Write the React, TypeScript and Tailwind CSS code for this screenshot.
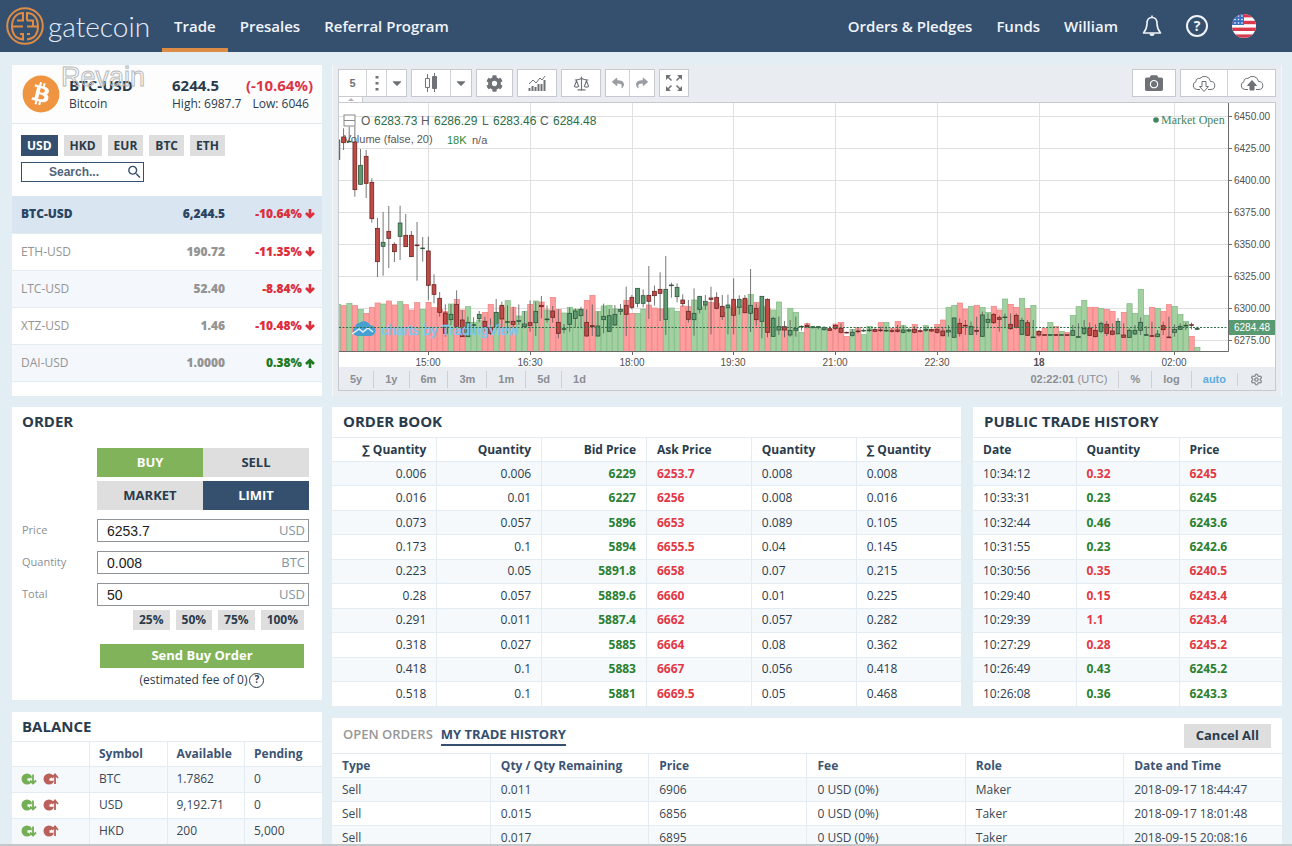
import type { ReactNode } from "react";
import { FaBitcoin, FaCamera, FaCaretDown, FaCog, FaReply, FaShare } from "react-icons/fa";
import { MdSearch } from "react-icons/md";
import { Scale, Settings } from "lucide-react";

const markets = [
  { pair: "BTC-USD", price: "6,244.5", change: "-10.64%", up: false, active: true },
  { pair: "ETH-USD", price: "190.72", change: "-11.35%", up: false, active: false },
  { pair: "LTC-USD", price: "52.40", change: "-8.84%", up: false, active: false },
  { pair: "XTZ-USD", price: "1.46", change: "-10.48%", up: false, active: false },
  { pair: "DAI-USD", price: "1.0000", change: "0.38%", up: true, active: false },
];

const orderBook = [
  ["0.006", "0.006", "6229", "6253.7", "0.008", "0.008"],
  ["0.016", "0.01", "6227", "6256", "0.008", "0.016"],
  ["0.073", "0.057", "5896", "6653", "0.089", "0.105"],
  ["0.173", "0.1", "5894", "6655.5", "0.04", "0.145"],
  ["0.223", "0.05", "5891.8", "6658", "0.07", "0.215"],
  ["0.28", "0.057", "5889.6", "6660", "0.01", "0.225"],
  ["0.291", "0.011", "5887.4", "6662", "0.057", "0.282"],
  ["0.318", "0.027", "5885", "6664", "0.08", "0.362"],
  ["0.418", "0.1", "5883", "6667", "0.056", "0.418"],
  ["0.518", "0.1", "5881", "6669.5", "0.05", "0.468"],
];

const publicTrades = [
  { time: "10:34:12", qty: "0.32", price: "6245", up: false },
  { time: "10:33:31", qty: "0.23", price: "6245", up: true },
  { time: "10:32:44", qty: "0.46", price: "6243.6", up: true },
  { time: "10:31:55", qty: "0.23", price: "6242.6", up: true },
  { time: "10:30:56", qty: "0.35", price: "6240.5", up: false },
  { time: "10:29:40", qty: "0.15", price: "6243.4", up: false },
  { time: "10:29:39", qty: "1.1", price: "6243.4", up: false },
  { time: "10:27:29", qty: "0.28", price: "6245.2", up: false },
  { time: "10:26:49", qty: "0.43", price: "6245.2", up: true },
  { time: "10:26:08", qty: "0.36", price: "6243.3", up: true },
];

const balances = [
  ["BTC", "1.7862", "0"],
  ["USD", "9,192.71", "0"],
  ["HKD", "200", "5,000"],
];

const myTrades = [
  ["Sell", "0.011", "6906", "0 USD (0%)", "Maker", "2018-09-17 18:44:47"],
  ["Sell", "0.015", "6856", "0 USD (0%)", "Taker", "2018-09-17 18:01:48"],
  ["Sell", "0.017", "6895", "0 USD (0%)", "Taker", "2018-09-15 20:08:16"],
];

// 1 = up, 0 = down, then: volume top, high, body top, body bottom, low (thirds of a pixel)
const candles = [
  [1, 253, -240, -240, -182, -182], [0, 257, -275, -249, -232, -210], [1, 250, -280, -236, -234, -234],
  [0, 257, -280, -234, -91, -70], [1, 268, -213, -164, -107, -107], [0, 280, -210, -191, -110, -66],
  [0, 262, -125, -113, -4, 8], [0, 249, -6, 25, 125, 171], [1, 252, -24, 67, 79, 167],
  [0, 243, -42, 34, 55, 144], [0, 255, 67, 73, 95, 126], [1, 245, -43, 9, 49, 120],
  [0, 254, -18, 46, 80, 80], [0, 270, 33, 46, 110, 110], [0, 248, 6, 75, 77, 182],
  [1, 268, 51, 84, 86, 125], [0, 247, 50, 93, 196, 240], [0, 263, 163, 194, 223, 250],
  [0, 268, 216, 235, 277, 290], [0, 275, 253, 279, 340, 350], [1, 252, 253, 283, 299, 315],
  [0, 238, 211, 253, 319, 340], [0, 270, 270, 300, 350, 350], [1, 260, 290, 307, 350, 350],
  [1, 307, 292, 314, 316, 340], [1, 300, 273, 283, 296, 307], [0, 277, 290, 304, 320, 335],
  [0, 253, 295, 322, 340, 345], [1, 278, 237, 277, 320, 330], [0, 262, 245, 256, 297, 325],
  [1, 242, 256, 305, 307, 340], [0, 262, 260, 304, 313, 325], [1, 288, 253, 302, 304, 315],
  [1, 274, 273, 312, 320, 325], [0, 253, 241, 308, 316, 335], [1, 243, 245, 274, 308, 348],
  [0, 246, 228, 256, 260, 295], [1, 270, 256, 297, 299, 308], [0, 232, 258, 273, 292, 308],
  [0, 268, 268, 307, 340, 355], [1, 279, 312, 326, 328, 340], [1, 262, 262, 280, 313, 335],
  [1, 268, 265, 273, 295, 322], [1, 267, 260, 269, 287, 325], [0, 241, 268, 307, 348, 350],
  [0, 226, 253, 317, 320, 348], [1, 274, 275, 318, 348, 350], [1, 258, 251, 289, 299, 340],
  [1, 256, 267, 287, 334, 336], [1, 267, 255, 283, 315, 318], [1, 268, 252, 268, 274, 285],
  [0, 241, 200, 256, 283, 348], [0, 280, 225, 232, 262, 268], [1, 280, 205, 205, 250, 262],
  [1, 267, 208, 227, 250, 262], [0, 255, 138, 226, 244, 297], [0, 264, 197, 214, 227, 257],
  [0, 267, 157, 208, 220, 303], [1, 265, 108, 208, 298, 345], [1, 264, 188, 195, 197, 233],
  [1, 274, 190, 202, 230, 247], [0, 258, 223, 240, 251, 260], [0, 260, 240, 274, 298, 308],
  [1, 240, 205, 280, 299, 347], [1, 262, 229, 229, 268, 280], [1, 257, 225, 244, 255, 270],
  [0, 247, 200, 234, 238, 343], [0, 250, 217, 232, 265, 268], [0, 277, 225, 259, 290, 300],
  [1, 265, 224, 255, 263, 343], [0, 262, 175, 238, 286, 343], [1, 258, 226, 238, 262, 284],
  [0, 240, 225, 235, 278, 280], [1, 223, 147, 256, 280, 336], [0, 247, 250, 265, 299, 318],
  [1, 260, 229, 229, 304, 355], [0, 265, 235, 238, 337, 352], [1, 270, 290, 295, 349, 349],
  [1, 246, 290, 320, 330, 345], [0, 325, 303, 320, 330, 352], [1, 265, 300, 331, 345, 350],
  [1, 277, 290, 325, 331, 350], [1, 337, 316, 319, 321, 332], [0, 311, 308, 316, 320, 325],
  [1, 322, 318, 320, 322, 326], [1, 322, 318, 320, 322, 328], [1, 325, 318, 323, 329, 332],
  [0, 328, 318, 326, 331, 333], [0, 312, 313, 316, 325, 330], [0, 307, 310, 325, 337, 340],
  [0, 349, 335, 337, 339, 340], [1, 328, 328, 337, 346, 350], [0, 323, 325, 333, 335, 340],
  [1, 344, 325, 331, 333, 336], [1, 319, 322, 330, 332, 336], [0, 330, 322, 328, 334, 336],
  [0, 308, 320, 330, 332, 336], [1, 307, 320, 331, 333, 336], [0, 326, 325, 332, 334, 338],
  [0, 304, 315, 330, 334, 338], [1, 317, 316, 330, 337, 340], [1, 328, 324, 330, 333, 337],
  [0, 313, 318, 328, 337, 340], [0, 333, 325, 332, 334, 338], [1, 317, 320, 328, 331, 336],
  [0, 330, 325, 328, 333, 336], [0, 313, 320, 328, 337, 341], [0, 300, 320, 333, 347, 350],
  [1, 262, 315, 331, 336, 350], [1, 256, 292, 294, 352, 352], [0, 249, 295, 310, 340, 350],
  [0, 267, 300, 316, 318, 345], [1, 259, 305, 319, 343, 345], [0, 256, 290, 331, 334, 345],
  [1, 262, 275, 285, 349, 350], [1, 277, 280, 298, 307, 325], [0, 259, 280, 283, 308, 312],
  [0, 270, 287, 293, 298, 335], [1, 237, 280, 291, 293, 325], [0, 253, 280, 313, 326, 330],
  [0, 262, 280, 286, 322, 325], [1, 235, 293, 301, 343, 345], [0, 265, 300, 308, 346, 348],
  [1, 256, 300, 351, 353, 353], [0, 334, 330, 334, 345, 350], [0, 325, 344, 344, 346, 346],
  [1, 307, 344, 344, 346, 346], [0, 319, 344, 344, 346, 346], [1, 334, 344, 344, 346, 346],
  [0, 337, 344, 344, 346, 346], [1, 286, 315, 332, 346, 348], [1, 260, 310, 350, 352, 353],
  [1, 241, 300, 325, 340, 345], [0, 262, 307, 324, 346, 348], [0, 262, 313, 331, 350, 352],
  [1, 265, 305, 310, 334, 340], [0, 268, 303, 313, 340, 348], [0, 274, 310, 333, 343, 346],
  [1, 343, 294, 304, 341, 343], [0, 277, 310, 345, 352, 353], [1, 251, 325, 331, 352, 354],
  [1, 280, 315, 331, 342, 345], [1, 208, 292, 307, 331, 345], [1, 286, 318, 344, 346, 347],
  [0, 262, 305, 347, 349, 350], [1, 265, 330, 342, 350, 352], [0, 274, 305, 317, 329, 345],
  [0, 254, 290, 351, 353, 353], [1, 259, 313, 328, 337, 350], [1, 283, 310, 319, 328, 330],
  [1, 304, 308, 316, 318, 330], [0, 349, 308, 314, 316, 328], [1, 382, 320, 325, 328, 328],
];

const timeTicks = [
  { label: "15:00", x: 89 },
  { label: "16:30", x: 191 },
  { label: "18:00", x: 293 },
  { label: "19:30", x: 394 },
  { label: "21:00", x: 496 },
  { label: "22:30", x: 598 },
  { label: "18", x: 700, bold: true },
  { label: "02:00", x: 835 },
];

const priceTicks = ["6450.00", "6425.00", "6400.00", "6375.00", "6350.00", "6325.00", "6300.00", "6275.00"];

const STEP = 5.653;
const toY = (v: number) => 117 + v / 3;

function PriceChart() {
  return (
    <svg viewBox="0 0 936 264" className="block w-full bg-white font-['Liberation_Sans',Arial,sans-serif]">
      <g stroke="#e0e0e0">
        {timeTicks.map((t) => (
          <line key={t.label} x1={t.x + 0.5} x2={t.x + 0.5} y1="0" y2="248" />
        ))}
        {priceTicks.map((p, i) => (
          <line key={p} x1="0" x2="889" y1={13.5 + i * 32} y2={13.5 + i * 32} />
        ))}
      </g>

      <g fontSize="12" fill="#5a5a5a">
        <rect x="5" y="12" width="11" height="11" fill="white" stroke="#888" />
        <path d="M5 17.5h11" stroke="#888" />
        <text x="22" y="22">O</text>
        <text x="35" y="22" fill="#2c6e4a">6283.73</text>
        <text x="82" y="22">H</text>
        <text x="95" y="22" fill="#2c6e4a">6286.29</text>
        <text x="143" y="22">L</text>
        <text x="154" y="22" fill="#2c6e4a">6283.46</text>
        <text x="201" y="22">C</text>
        <text x="214" y="22" fill="#2c6e4a">6284.48</text>
        <text x="5" y="40" fontSize="11">Volume (false, 20)</text>
        <text x="108" y="41" fontSize="11" fill="#2a8a35">18K</text>
        <text x="133" y="41" fontSize="11">n/a</text>
      </g>

      {candles.map(([up, vol], i) => (
        <rect
          key={i}
          x={i * STEP - 3.5}
          y={toY(vol)}
          width="5.2"
          height={248.5 - toY(vol)}
          fill={up ? "#a3d0a1" : "#ff9e9e"}
          stroke={up ? "#7dba80" : "#ee8080"}
          strokeWidth="0.7"
        />
      ))}
      {candles.map(([up, , high, top, bottom, low], i) => (
        <g key={i} stroke={up ? "#2c5539" : "#6b2424"} strokeWidth="0.8">
          <line x1={i * STEP - 1.1} x2={i * STEP - 1.1} y1={toY(high)} y2={toY(low)} stroke="#555" strokeWidth="0.8" />
          <rect
            x={i * STEP - 3}
            y={toY(top)}
            width="3.8"
            height={(bottom - top) / 3}
            fill={up ? "#5f9a73" : "#c04a45"}
          />
        </g>
      ))}

      <g>
        <path
          d="M18 233a5 5 0 0 1-2-9 5 5 0 0 1 4-4 7 7 0 0 1 11 2 5.500 5.500 0 0 1 0 11z"
          fill="#46a0d2"
        />
        <path d="M13 231l7-5 4 3 5-4 5 4" fill="none" stroke="#dff1fa" strokeWidth="1.500" />
        <text x="42" y="232" fontSize="14" fill="#7cc8ee" stroke="#7cc8ee" strokeWidth="0.6">
          charts by TradingView
        </text>
      </g>

      <path d="M0 224.500h889" stroke="#2f7048" strokeDasharray="2 1.500" />
      <path d="M0 248.500h889.500V0" fill="none" stroke="#6a6a6a" />

      <g fontSize="10" fill="#505050">
        {priceTicks.map((p, i) => (
          <g key={p}>
            <line x1="889" x2="893" y1={13.5 + i * 32} y2={13.5 + i * 32} stroke="#6a6a6a" />
            <text x="895" y={17 + i * 32}>{p}</text>
          </g>
        ))}
        {timeTicks.map((t) => (
          <g key={t.label}>
            <line x1={t.x + 0.5} x2={t.x + 0.5} y1="248" y2="252" stroke="#6a6a6a" />
            <text x={t.x} y="263" textAnchor="middle" fontWeight={t.bold ? 700 : 400}>{t.label}</text>
          </g>
        ))}
        <rect x="890" y="217" width="46" height="15" fill="#5a9a73" />
        <text x="895" y="228" fill="white">6284.48</text>
      </g>

      <circle cx="817" cy="17" r="2.800" fill="#3f8560" />
      <text x="822" y="21" fontSize="12" fill="#3f8560" className="font-['Liberation_Serif',serif]">
        Market Open
      </text>
    </svg>
  );
}

function Logo() {
  return (
    <a href="#" className="flex items-center gap-1">
      <svg viewBox="0 0 38 38" className="h-[38px] w-[38px]" fill="none" stroke="#dd8b45" strokeWidth="2">
        <circle cx="19" cy="19" r="17.800" />
        <path d="M17 19.500H6C6 11 10.500 6 17 6v7.500H11" />
        <path d="M6 19.500C6 27 10 32 17 32.500V27h-3" />
        <path d="M21 13.500V6c6.500 0 11 5 11 13.500H21M21 13.500h6v6" />
        <path d="M32 19.500C32 27 28 32 21 32.500M21 27h3" />
      </svg>
      <span className="font-['Lato',sans-serif] text-[28px] leading-8 font-light text-[#e4edfb]">gatecoin</span>
    </a>
  );
}

function Flag() {
  return (
    <svg viewBox="0 0 24 24" className="h-6 w-6">
      <clipPath id="flag">
        <circle cx="12" cy="12" r="12" />
      </clipPath>
      <g clipPath="url(#flag)">
        <rect width="24" height="24" fill="white" />
        {[0, 1, 2, 3].map((i) => (
          <rect key={i} y={i * 6.8} width="24" height="3.4" fill="#d83a4b" />
        ))}
        <rect width="12" height="11" fill="#3a6fc4" />
        <g fill="white">
          {[2, 5.5, 9].map((y) => [3, 6.5, 10].map((x) => <circle key={`${x}-${y}`} cx={x} cy={y} r="0.8" />))}
        </g>
      </g>
    </svg>
  );
}

function Header() {
  return (
    <header className="flex h-[52px] shrink-0 items-stretch bg-[#35506f] pl-[6px] text-[15px] font-semibold text-[#f0f4fa]">
      <Logo />
      <nav className="ml-3 flex">
        <a href="#" className="flex items-center border-b-4 border-[#dd8b45] px-3 pt-1">Trade</a>
        <a href="#" className="flex items-center px-3">Presales</a>
        <a href="#" className="flex items-center px-3">Referral Program</a>
      </nav>
      <nav className="mr-9 ml-auto flex items-center gap-6">
        <a href="#">Orders &amp; Pledges</a>
        <a href="#">Funds</a>
        <a href="#">William</a>
        <button aria-label="Notifications">
          <svg viewBox="0 0 20 22" className="h-[22px] w-5" fill="none" stroke="currentColor" strokeWidth="1.600">
            <path d="M10 2.500c-3.500 0-5 3-5 6 0 5-1.500 7-3.500 9.500h17C16.500 15.500 15 13.500 15 8.500c0-3-1.500-6-5-6z" strokeLinejoin="round" />
            <path d="M10 .5v2" />
            <path d="M7.500 18.500a2.500 2.500 0 0 0 5 0z" fill="currentColor" stroke="none" />
          </svg>
        </button>
        <button className="flex h-[22px] w-[22px] items-center justify-center rounded-full border-2 border-current text-sm font-bold">
          ?
        </button>
        <button aria-label="Language"><Flag /></button>
      </nav>
    </header>
  );
}

function ChangeArrow({ up }: { up: boolean }) {
  return (
    <svg viewBox="0 0 10 10" className="h-[10px] w-[10px]" fill="none" stroke="currentColor" strokeWidth="2.600">
      <path d={up ? "M5 10V1.500M1 6l4-4 4 4" : "M5 0v8.500M1 4l4 4 4-4"} />
    </svg>
  );
}

function MarketPanel() {
  return (
    <section className="relative bg-white">
      <span className="absolute -top-1 left-[49px] text-[27px] leading-8 text-transparent font-['Liberation_Sans',Arial,sans-serif] [-webkit-text-stroke:1px_#b9b9b9]">
        Revain
      </span>
      <div className="flex h-[59px] items-center border-b border-[#e3e8ec] bg-[#fdfdfd] pl-[10px] text-[#2a3b4c]">
        <FaBitcoin className="h-[38px] w-[38px] text-[#ef9440]" />
        <div className="ml-[9px] w-[103px]">
          <div className="text-[15px] leading-5 font-bold">BTC-USD</div>
          <div className="text-xs leading-[18px]">Bitcoin</div>
        </div>
        <div className="w-[141px]">
          <div className="flex justify-between text-[15px] leading-5 font-bold">
            6244.5 <span className="text-[#dc3545]">(-10.64%)</span>
          </div>
          <div className="flex gap-[11px] text-xs leading-[18px] whitespace-nowrap">
            <span>High: 6987.7</span>
            <span>Low: 6046</span>
          </div>
        </div>
      </div>

      <div className="h-[72px] px-[9px] pt-[11px]">
        <div className="flex gap-[6px]">
          <button className="h-[21px] bg-[#35506f] px-[6px] text-xs font-bold text-white">USD</button>
          {["HKD", "EUR", "BTC", "ETH"].map((c) => (
            <button key={c} className="h-[21px] bg-[#dedede] px-[6px] text-xs font-bold text-[#2a3b4c]">{c}</button>
          ))}
        </div>
        <div className="mt-[6px] flex h-5 w-[123px] items-center border border-[#35506f]">
          <input
            aria-label="Search markets"
            placeholder="Search..."
            className="w-[104px] text-center text-xs font-bold outline-none font-['Liberation_Sans',Arial,sans-serif] placeholder:text-[#50637a]"
          />
          <MdSearch className="h-[18px] w-[18px] text-[#35506f]" />
        </div>
      </div>

      <table className="w-full text-xs">
        <tbody>
          {markets.map((m, i) => (
            <tr
              key={m.pair}
              className={`h-[37px] border-b border-[#e3ecf2] ${m.active ? "bg-[#d9e6f1] text-[#2b4564]" : i % 2 ? "bg-white text-[#949494]" : "bg-[#f4f8fc] text-[#949494]"}`}
            >
              <td className={`pl-[9px] ${m.active ? "font-extrabold" : "font-normal"}`}>{m.pair}</td>
              <td className="text-right font-extrabold">{m.price}</td>
              <td className={`w-[97px] pr-[7px] font-extrabold ${m.up ? "text-[#1f7a1f]" : "text-[#dc2f3c]"}`}>
                <div className="flex items-center justify-end gap-[3px]">
                  {m.change}
                  <ChangeArrow up={m.up} />
                </div>
              </td>
            </tr>
          ))}
        </tbody>
      </table>
    </section>
  );
}

function ToolGroup({ children }: { children: ReactNode }) {
  return <div className="flex h-7 divide-x divide-[#d0d3d8] border border-[#c6c9ce] bg-white text-[#6f7277]">{children}</div>;
}

function Tool({ label, className, children }: { label: string; className: string; children: ReactNode }) {
  return (
    <button aria-label={label} className={`flex items-center justify-center ${className}`}>
      {children}
    </button>
  );
}

function CloudIcon({ up }: { up?: boolean }) {
  return (
    <svg viewBox="0 0 24 18" className="h-[18px] w-6" fill="none" stroke="currentColor">
      <path d="M8 15.500H5a4 4 0 0 1-1-7.800 3 3 0 0 1 4-3.200 6 6 0 0 1 10.500 3A4 4 0 0 1 19 15.500h-3" />
      {up ? (
        <path d="M12 6.500l4.500 5H14V16h-4v-4.500H7.500z" fill="currentColor" />
      ) : (
        <path d="M10 7.500h4v5h2.500L12 17.500 7.500 12.500H10z" fill="white" />
      )}
    </svg>
  );
}

function ChartPanel() {
  return (
    <section className="border-x border-[#f6f8fa] bg-[#e9ecf0] px-[5px] pt-1 pb-[5px] font-['Liberation_Sans',Arial,sans-serif]">
      <div className="flex gap-1">
        <ToolGroup>
          <Tool label="Interval" className="w-7 text-[11px] font-bold">5</Tool>
          <Tool label="More intervals" className="w-5">
            <svg viewBox="0 0 4 16" className="h-4 w-1" fill="currentColor">
              <path d="M0.500 1h3v2.500h-3zM0.500 7h3v2.500h-3zM0.500 13h3v2.500h-3z" />
            </svg>
          </Tool>
          <Tool label="Choose interval" className="w-[19px]"><FaCaretDown size={14} /></Tool>
        </ToolGroup>
        <ToolGroup>
          <Tool label="Bar style" className="w-[39px]">
            <svg viewBox="0 0 14 20" className="h-5 w-[14px]" stroke="currentColor" fill="none">
              <path d="M3.500 1v4M3.500 15v4M10.500 0v3M10.500 15v4" />
              <path d="M1.500 5.500h4v9h-4z" />
              <path d="M8.500 3.500h4v12h-4z" fill="currentColor" />
            </svg>
          </Tool>
          <Tool label="Choose bar style" className="w-5"><FaCaretDown size={14} /></Tool>
        </ToolGroup>
        <ToolGroup>
          <Tool label="Chart properties" className="w-[35px]"><FaCog size={17} /></Tool>
        </ToolGroup>
        <ToolGroup>
          <Tool label="Indicators" className="w-[38px]">
            <svg viewBox="0 0 18 16" className="h-4 w-[18px]" stroke="currentColor" fill="none">
              <path d="M1 9l4-4 3 3 4-5 2 2 3-4" />
              <path d="M1.500 16v-3M4.500 16v-5M7.500 16v-4M10.500 16V9M13.500 16V9M16.500 16V5" strokeWidth="2" />
            </svg>
          </Tool>
        </ToolGroup>
        <ToolGroup>
          <Tool label="Compare" className="w-[38px]"><Scale size={17} strokeWidth={1.6} /></Tool>
        </ToolGroup>
        <ToolGroup>
          <Tool label="Undo" className="w-6 text-[#9a9da2]"><FaReply size={12} /></Tool>
          <Tool label="Redo" className="w-6 text-[#9a9da2]"><FaShare size={12} /></Tool>
        </ToolGroup>
        <ToolGroup>
          <Tool label="Fullscreen" className="w-7">
            <svg viewBox="0 0 18 18" className="h-[18px] w-[18px]" fill="currentColor">
              <path d="M1 1h5L1 6zM17 1v5l-5-5zM1 17v-5l5 5zM17 17h-5l5-5z" />
              <path d="M3 3l3.500 3.500M15 3l-3.500 3.500M3 15l3.500-3.500M15 15l-3.500-3.500" stroke="currentColor" strokeWidth="1.500" />
            </svg>
          </Tool>
        </ToolGroup>
        <div className="ml-auto flex gap-1">
          <ToolGroup>
            <Tool label="Take a snapshot" className="w-[42px]"><FaCamera size={18} /></Tool>
          </ToolGroup>
          <ToolGroup>
            <Tool label="Load chart" className="w-[47px]"><CloudIcon /></Tool>
            <Tool label="Save chart" className="w-[47px]"><CloudIcon up /></Tool>
          </ToolGroup>
        </div>
      </div>
      <div className="flex h-[5px] w-[25px] items-center justify-center border-x border-[#c6c9ce] bg-white">
        <svg viewBox="0 0 6 3" className="h-[3px] w-[6px]"><path d="M0 3l3-3 3 3z" fill="#b5b5b5" /></svg>
      </div>
      <div className="border border-[#c6c9ce]">
        <PriceChart />
        <div className="flex h-[23px] items-center pt-[2px] text-[11px] font-bold text-[#8b8e94]">
          {["5y", "1y", "6m", "3m", "1m", "5d"].map((r) => (
            <button key={r} className="border-r border-[#cdd0d5] px-[11px]">{r}</button>
          ))}
          <button className="px-[11px]">1d</button>
          <div className="ml-auto pr-[11px]">02:22:01 <span className="font-normal">(UTC)</span></div>
          <button className="border-l border-[#cdd0d5] px-[11px]">%</button>
          <button className="border-l border-[#cdd0d5] px-[11px]">log</button>
          <button className="border-l border-[#cdd0d5] px-[11px] text-[#5aaee0]">auto</button>
          <button aria-label="Settings" className="border-l border-[#cdd0d5] px-3">
            <Settings size={13} strokeWidth={2.6} />
          </button>
        </div>
      </div>
    </section>
  );
}

function OrderField({ id, label, value, unit }: { id: string; label: string; value: string; unit: string }) {
  return (
    <div className="mb-[9px] flex items-center">
      <label htmlFor={id} className="w-[75px] text-[11px] text-[#8a8f94]">{label}</label>
      <div className="flex h-[23px] w-[212px] items-center border border-[#8f9499] pr-[3px] pl-[9px]">
        <input
          id={id}
          defaultValue={value}
          className="min-w-0 flex-1 text-sm text-[#1c1c1c] outline-none font-['Liberation_Sans',Arial,sans-serif]"
        />
        <span className="text-[13px] text-[#8295a3]">{unit}</span>
      </div>
    </div>
  );
}

function OrderPanel() {
  return (
    <section className="h-[293px] bg-white px-[10px] text-[#2a3b4c]">
      <h2 className="h-[41px] text-[15px] leading-[28px] font-bold">ORDER</h2>
      <div className="ml-[75px] grid w-[212px] grid-cols-2 gap-y-1 text-[13px] font-bold">
        <button className="h-[29px] bg-[#81b35a] text-white">BUY</button>
        <button className="h-[29px] bg-[#dedede]">SELL</button>
        <button className="h-[29px] bg-[#dedede]">MARKET</button>
        <button className="h-[29px] bg-[#35506f] text-white">LIMIT</button>
      </div>
      <form className="mt-[9px]" onSubmit={(e) => e.preventDefault()}>
        <OrderField id="price" label="Price" value="6253.7" unit="USD" />
        <OrderField id="quantity" label="Quantity" value="0.008" unit="BTC" />
        <OrderField id="total" label="Total" value="50" unit="USD" />
        <div className="-mt-[5px] ml-[111px] flex gap-[6px]">
          {["25%", "50%", "75%", "100%"].map((p) => (
            <button key={p} type="button" className="h-5 bg-[#dedede] px-[6px] text-xs font-bold">{p}</button>
          ))}
        </div>
        <button className="mt-[14px] ml-[78px] h-[24px] w-[204px] bg-[#81b35a] text-[13px] font-bold text-white">
          Send Buy Order
        </button>
      </form>
      <div className="ml-[78px] flex h-6 w-[204px] items-center justify-center gap-[2px] text-xs">
        (estimated fee of 0)
        <button className="flex h-[15px] w-[15px] items-center justify-center rounded-full border border-[#2a3b4c] text-[10px] font-bold">
          ?
        </button>
      </div>
    </section>
  );
}

function TransferIcon({ up }: { up?: boolean }) {
  const color = up ? "#b9605a" : "#74ae55";
  return (
    <svg viewBox="0 0 16 12" className="h-3 w-4">
      <circle cx="6" cy="6" r="5.500" fill={color} />
      <path d={up ? "M6.500 6.500h3V4M12 11V2" : "M6.500 6.500h3V9M12 1v9"} stroke="white" strokeWidth="2.400" fill="none" />
      <path d={up ? "M12 11V2M9 5l3-3.500L15 5" : "M12 1.500v9M9 7.500l3 3 3-3"} stroke={color} strokeWidth="1.800" fill="none" />
    </svg>
  );
}

function BalancePanel() {
  return (
    <section className="flex-1 bg-white">
      <h2 className="h-[29px] pl-[10px] text-[15px] leading-[28px] font-bold text-[#2a3b4c]">BALANCE</h2>
      <table className="w-full table-fixed border-t border-[#e3ecf2] text-left text-xs">
        <thead>
          <tr className="h-[25px] divide-x divide-[#e3ecf2] text-[#3c5473]">
            <th aria-label="Actions" />
            <th className="pl-[9px]">Symbol</th>
            <th className="pl-[9px]">Available</th>
            <th className="pl-[9px]">Pending</th>
          </tr>
        </thead>
        <tbody>
          {balances.map((b) => (
            <tr key={b[0]} className="h-[26px] divide-x divide-[#e3ecf2] border-t border-[#e3ecf2] text-[#3a4754] odd:bg-[#f5f9fc]">
              <td>
                <div className="flex gap-[6px] pl-[9px]">
                  <button aria-label={`Deposit ${b[0]}`}><TransferIcon /></button>
                  <button aria-label={`Withdraw ${b[0]}`}><TransferIcon up /></button>
                </div>
              </td>
              {b.map((v, i) => (
                <td key={i} className="pl-[9px]">{v}</td>
              ))}
            </tr>
          ))}
        </tbody>
      </table>
    </section>
  );
}

function OrderBook() {
  const heads = ["∑ Quantity", "Quantity", "Bid Price", "Ask Price", "Quantity", "∑ Quantity"];
  return (
    <section className="bg-white text-[#2a3b4c]">
      <h2 className="h-[30px] pl-[11px] text-[15px] leading-[28px] font-bold">ORDER BOOK</h2>
      <table className="h-[269px] w-full table-fixed border-t border-[#e3ecf2] text-xs">
        <thead>
          <tr className="h-6 divide-x divide-[#e3ecf2]">
            {heads.map((h, i) => (
              <th key={i} className={`px-[10px] ${i < 3 ? "text-right" : "text-left"}`}>{h}</th>
            ))}
          </tr>
        </thead>
        <tbody>
          {orderBook.map((row, r) => (
            <tr key={r} className="h-6 divide-x divide-[#e3ecf2] border-t border-[#e3ecf2] odd:bg-[#f5f9fc]">
              {row.map((v, i) => (
                <td
                  key={i}
                  className={`px-[10px] ${i < 3 ? "text-right" : "text-left"} ${i === 2 ? "font-bold text-[#2a8030]" : i === 3 ? "font-bold text-[#e23845]" : ""}`}
                >
                  {v}
                </td>
              ))}
            </tr>
          ))}
        </tbody>
      </table>
    </section>
  );
}

function PublicHistory() {
  return (
    <section className="bg-white text-[#2a3b4c]">
      <h2 className="h-[30px] pl-[11px] text-[15px] leading-[28px] font-bold">PUBLIC TRADE HISTORY</h2>
      <table className="h-[269px] w-full table-fixed border-t border-[#e3ecf2] text-left text-xs">
        <thead>
          <tr className="h-6 divide-x divide-[#e3ecf2]">
            <th className="pl-[10px]">Date</th>
            <th className="pl-[10px]">Quantity</th>
            <th className="pl-[10px]">Price</th>
          </tr>
        </thead>
        <tbody>
          {publicTrades.map((t) => (
            <tr key={t.time} className="h-6 divide-x divide-[#e3ecf2] border-t border-[#e3ecf2] odd:bg-[#f5f9fc]">
              <td className="pl-[10px]">{t.time}</td>
              <td className={`pl-[10px] font-bold ${t.up ? "text-[#2a8030]" : "text-[#e23845]"}`}>{t.qty}</td>
              <td className={`pl-[10px] font-bold ${t.up ? "text-[#2a8030]" : "text-[#e23845]"}`}>{t.price}</td>
            </tr>
          ))}
        </tbody>
      </table>
    </section>
  );
}

function MyTrades() {
  return (
    <section className="flex-1 bg-white">
      <div className="flex h-[35px] items-center gap-2 pr-[11px] pl-[11px] text-[13px]">
        <button className="border-b-2 border-transparent font-semibold text-[#979797]">OPEN ORDERS</button>
        <button className="border-b-2 border-[#35506f] font-bold text-[#35506f]">MY TRADE HISTORY</button>
        <button className="ml-auto h-6 bg-[#dedede] px-3 font-bold text-[#2a3b4c]">Cancel All</button>
      </div>
      <table className="w-full table-fixed border-t border-[#e3ecf2] text-left text-xs">
        <thead>
          <tr className="h-6 divide-x divide-[#e3ecf2] text-[#3c5473]">
            {["Type", "Qty / Qty Remaining", "Price", "Fee", "Role", "Date and Time"].map((h) => (
              <th key={h} className="pl-[10px]">{h}</th>
            ))}
          </tr>
        </thead>
        <tbody>
          {myTrades.map((row) => (
            <tr key={row[5]} className="h-6 divide-x divide-[#e3ecf2] border-t border-[#e3ecf2] text-[#3a4754] odd:bg-[#f5f9fc]">
              {row.map((v, i) => (
                <td key={i} className="pl-[10px]">{v}</td>
              ))}
            </tr>
          ))}
        </tbody>
      </table>
    </section>
  );
}

export default function App() {
  return (
    <div className="flex h-screen flex-col overflow-hidden border-b-2 border-[#c3c8cb] bg-[#e2edf4] font-['Open_Sans',sans-serif]">
      <Header />
      <main className="grid min-h-0 flex-1 grid-cols-[310px_1fr] grid-rows-[auto_1fr] gap-x-[10px] gap-y-[11px] pt-[13px] pr-[10px] pl-3">
        <MarketPanel />
        <ChartPanel />
        <div className="flex min-h-0 flex-col gap-3">
          <OrderPanel />
          <BalancePanel />
        </div>
        <div className="flex min-h-0 flex-col gap-3">
          <div className="grid grid-cols-[629fr_309fr] gap-3">
            <OrderBook />
            <PublicHistory />
          </div>
          <MyTrades />
        </div>
      </main>
    </div>
  );
}
